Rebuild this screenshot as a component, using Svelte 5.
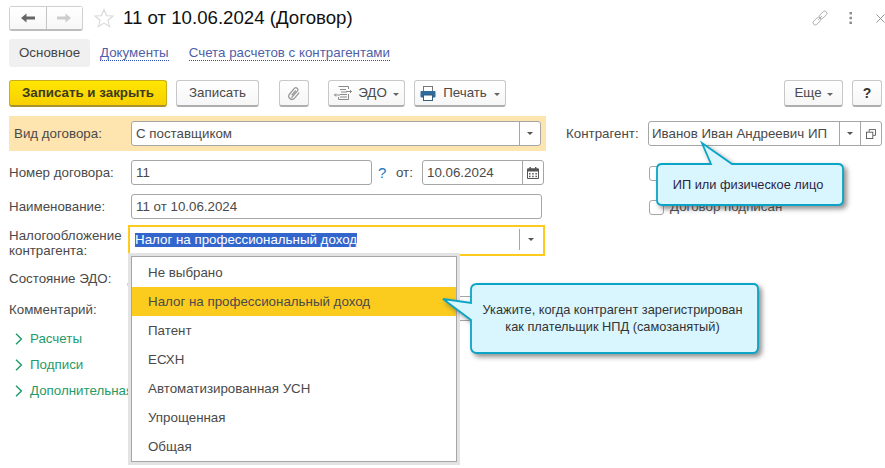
<script>
  const taxOptions = ['Не выбрано', 'Налог на профессиональный доход', 'Патент', 'ЕСХН', 'Автоматизированная УСН', 'Упрощенная', 'Общая'];
  const sections = ['Расчеты', 'Подписи', 'Дополнительная'];
</script>

<div class="page">
  <header class="titlebar">
    <div class="nav">
      <button class="nav-btn" aria-label="Назад">
        <svg width="16" height="12" viewBox="0 0 16 12"><path d="M1 6 L6.5 1.5 V4.5 H15 V7.5 H6.5 V10.5 Z" fill="#666"/></svg>
      </button>
      <button class="nav-btn" aria-label="Вперед">
        <svg width="16" height="12" viewBox="0 0 16 12"><path d="M15 6 L9.5 1.5 V4.5 H1 V7.5 H9.5 V10.5 Z" fill="#ccc"/></svg>
      </button>
    </div>
    <svg class="star" width="20" height="20" viewBox="0 0 20 20"><path d="M10 1.5 L12.5 7.6 L19 8 L14 12.2 L15.6 18.6 L10 15.1 L4.4 18.6 L6 12.2 L1 8 L7.5 7.6 Z" fill="none" stroke="#dcdcdc" stroke-width="1.2"/></svg>
    <h1>11 от 10.06.2024 (Договор)</h1>
    <div class="win-icons">
      <svg width="16" height="16" viewBox="0 0 18 18"><g transform="rotate(-45 9 9)" fill="none" stroke="#aaa" stroke-width="1"><rect x="-1" y="6.5" width="10" height="5" rx="2.5"/><rect x="9" y="6.5" width="10" height="5" rx="2.5"/><path d="M6 9 H12"/></g></svg>
      <svg width="6" height="14" viewBox="0 0 6 14"><g fill="#888"><rect x="1.5" y="1" width="2.4" height="2.4"/><rect x="1.5" y="5.8" width="2.4" height="2.4"/><rect x="1.5" y="10.6" width="2.4" height="2.4"/></g></svg>
      <svg width="9" height="9" viewBox="0 0 10 10"><path d="M0.5 0.5 L9.5 9.5 M9.5 0.5 L0.5 9.5" stroke="#8a8a8a" stroke-width="1" fill="none"/></svg>
    </div>
  </header>

  <nav class="tabs">
    <span class="tab active">Основное</span>
    <span class="tab link">Документы</span>
    <span class="tab link second">Счета расчетов с контрагентами</span>
  </nav>

  <div class="toolbar">
    <button class="btn primary">Записать и закрыть</button>
    <button class="btn save">Записать</button>
    <button class="btn clip" aria-label="Вложения">
      <svg width="14" height="16" viewBox="0 0 16 18"><path d="M5 14.5 L12 6.5 a2.3 2.3 0 0 0 -3.4 -3 L2.8 10.4 a3.7 3.7 0 0 0 5.4 5 L14 8.5 M5.4 11.6 L10 6.2" fill="none" stroke="#9a9a9a" stroke-width="1.5"/></svg>
    </button>
    <button class="btn edo">
      <svg width="18" height="16" viewBox="0 0 18 16"><g fill="none" stroke="#8a8a8a" stroke-width="1"><path d="M4.5 1.5 H14.5 V4 M14.5 9 V14.5 H4.5 V12"/><path d="M6 4.5 H12 M7 7 H13 M6 9.5 H13 M6 12 H13"/><path d="M0.5 10 H6 M2 8.5 L0.5 10 L2 11.5"/><path d="M12 6.5 H17.5 M16 5 L17.5 6.5 L16 8"/></g></svg>
      <span>ЭДО</span><i class="caret"></i>
    </button>
    <button class="btn print">
      <svg width="16" height="15" viewBox="0 0 16 15"><rect x="3.5" y="0.5" width="9" height="5" fill="#fff" stroke="#777"/><rect x="0.5" y="5" width="15" height="6.5" rx="1" fill="#2f6b9c"/><rect x="3.5" y="9" width="9" height="5.5" fill="#fff" stroke="#315d80"/></svg>
      <span>Печать</span><i class="caret"></i>
    </button>
    <div class="spacer"></div>
    <button class="btn more"><span>Еще</span><i class="caret"></i></button>
    <button class="btn help">?</button>
  </div>

  <main class="form">
    <section class="left">
      <div class="strip">
        <label class="strip-label" for="kind">Вид договора:</label>
        <div class="field kind">
          <span id="kind" class="value">С поставщиком</span>
          <span class="cell"><i class="caret dark"></i></span>
        </div>
      </div>

      <div class="row number">
        <span class="label">Номер договора:</span>
        <div class="field num"><span class="value">11</span></div>
        <span class="q">?</span>
        <span class="from">от:</span>
        <div class="field date">
          <span class="value">10.06.2024</span>
          <span class="cell">
            <svg width="12" height="12" viewBox="0 0 12 12"><path d="M0.5 2 H11.5 V11.5 H0.5 Z" fill="#fff" stroke="#555"/><rect x="0.5" y="1.5" width="11" height="3" fill="#555"/><rect x="2.5" y="0" width="1.4" height="2" fill="#555"/><rect x="8" y="0" width="1.4" height="2" fill="#555"/><g fill="#555"><rect x="2" y="6" width="1.5" height="1.5"/><rect x="5.2" y="6" width="1.5" height="1.5"/><rect x="8.4" y="6" width="1.5" height="1.5"/><rect x="2" y="8.7" width="1.5" height="1.5"/><rect x="5.2" y="8.7" width="1.5" height="1.5"/><rect x="8.4" y="8.7" width="1.5" height="1.5"/></g></svg>
          </span>
        </div>
      </div>

      <div class="row name">
        <span class="label">Наименование:</span>
        <div class="field wide"><span class="value">11 от 10.06.2024</span></div>
      </div>

      <div class="row tax">
        <span class="label two">Налогообложение<br />контрагента:</span>
        <div class="field focused">
          <span class="value"><span class="selected">Налог на профессиональный доход</span></span>
          <span class="cell plain"><i class="caret dark"></i></span>
        </div>
      </div>

      <div class="row edo-state">
        <span class="label">Состояние ЭДО:</span>
        <span class="tick"></span>
      </div>

      <div class="row comment">
        <span class="label">Комментарий:</span>
        <div class="field comment-field"></div>
      </div>

      <ul class="groups">
        {#each sections as s}
          <li>
            <svg width="8" height="12" viewBox="0 0 8 12"><path d="M1 0.8 L6.4 6 L1 11.2" fill="none" stroke="#1f9b6a" stroke-width="1.4"/></svg>
            <span>{s}</span>
          </li>
        {/each}
      </ul>
    </section>

    <section class="right">
      <div class="partner">
        <span class="partner-label">Контрагент:</span>
        <div class="field partner-field">
          <span class="value">Иванов Иван Андреевич ИП</span>
          <span class="cell small"><i class="caret dark"></i></span>
          <span class="cell small">
            <svg width="10" height="10" viewBox="0 0 11 11"><path d="M3.5 3 V0.5 H10.5 V7 H8" fill="none" stroke="#555"/><rect x="0.5" y="3.5" width="7" height="7" fill="none" stroke="#555"/></svg>
          </span>
        </div>
      </div>
      <label class="check first"><span class="box"></span></label>
      <label class="check"><span class="box"></span><span>Договор подписан</span></label>
    </section>
  </main>

  <ul class="dropdown">
    {#each taxOptions as o, i}
      <li class:hl={i === 1}>{o}</li>
    {/each}
  </ul>

  <div class="callout c1">
    <svg width="200" height="75" viewBox="0 0 200 75">
      <path class="bubble" d="M10 25 H59 L50 4 L80 25 H186 Q191 25 191 30 V61 Q191 66 186 66 H10 Q5 66 5 61 V30 Q5 25 10 25 Z"/>
    </svg>
    <span>ИП или физическое лицо</span>
  </div>

  <div class="callout c2">
    <svg width="330" height="85" viewBox="0 0 330 85">
      <path class="bubble" d="M40 9 Q40 3 46 3 H322 Q327 3 327 8 V66 Q327 72 322 72 H46 Q40 72 40 66 V39 L12 18 L40 22 Z"/>
    </svg>
    <span>Укажите, когда контрагент зарегистрирован<br />как плательщик НПД (самозанятый)</span>
  </div>
</div>

<style>
  :global(body) { margin: 0; background: #fff; }
  * { box-sizing: border-box; }
  .page {
    position: relative;
    width: 885px;
    height: 468px;
    overflow: hidden;
    background: #fff;
    font: 13.33px/16px "Liberation Sans", Arial, sans-serif;
    color: #4a4a4a;
  }
  button { font: inherit; color: inherit; padding: 0; }
  ul { list-style: none; margin: 0; padding: 0; }

  .titlebar { display: flex; align-items: center; height: 36px; padding-left: 9px; }
  .nav { display: flex; width: 74px; height: 25px; border: 1px solid #cfcfcf; border-bottom: 2px solid #bdbdbd; border-radius: 3px; }
  .nav-btn { flex: 1; border: 0; background: linear-gradient(#fff, #f7f7f7); display: flex; align-items: center; justify-content: center; }
  .nav-btn:first-child { border-right: 1px solid #c4c4c4; }
  .star { margin-left: 11px; }
  h1 { margin: 0 0 0 9px; font: 400 18.67px/24px "Liberation Sans", Arial, sans-serif; color: #111; flex: 1; }
  .win-icons { display: flex; align-items: center; width: 73px; }
  .win-icons svg:nth-child(2) { margin-left: 20px; }
  .win-icons svg:nth-child(3) { margin-left: 22px; }

  .tabs { display: flex; align-items: center; height: 28px; margin: 3px 0 0 9px; }
  .tab { height: 28px; line-height: 28px; }
  .active { width: 81px; padding-left: 10px; background: #f0f0f0; border-radius: 3px; color: #444; }
  .link { margin-left: 10px; height: auto; line-height: 15px; color: #4f5fa8; border-bottom: 1px dotted #2a4fb0; margin-top: -1px; }
  .second { margin-left: 20px; }

  .toolbar { display: flex; height: 27px; margin-top: 13px; padding: 0 3px 0 9px; }
  .btn {
    height: 27px;
    border: 1px solid #c8c8c8;
    border-bottom: 2px solid #aeaeae;
    border-radius: 3px;
    background: linear-gradient(#fff, #f6f6f6);
    display: flex;
    align-items: center;
    justify-content: center;
    color: #4a4a4a;
  }
  .primary { width: 158px; background: linear-gradient(#ffe600, #f8d000); border-color: #c9ae1a; border-bottom-color: #a8932a; font-weight: 700; color: #3d3a20; }
  .save { width: 83px; margin-left: 9px; }
  .clip { width: 30px; margin-left: 20px; }
  .edo { width: 77px; margin-left: 19px; gap: 6px; }
  .print { width: 92px; margin-left: 9px; gap: 7px; }
  .spacer { flex: 1; }
  .more { width: 59px; gap: 5px; }
  .help { width: 30px; margin-left: 9px; font-weight: 700; color: #333; font-size: 14px; }
  .caret { display: inline-block; width: 0; height: 0; border-left: 3.5px solid transparent; border-right: 3.5px solid transparent; border-top: 3.5px solid #666; margin-top: 3px; }
  .caret.dark { border-top-color: #555; margin-top: 0; }

  .form { display: flex; margin: 9px 0 0 0; }
  .left { width: 546px; padding-left: 9px; flex: none; }
  .right { flex: 1; padding: 5px 0 0 20px; }

  .field { display: flex; height: 25px; border: 1px solid #a6a6a6; border-radius: 3px; background: #fff; align-items: stretch; }
  .value { flex: 1; padding-left: 4px; line-height: 23px; color: #4a4a4a; white-space: nowrap; overflow: hidden; }
  .cell { width: 21px; border-left: 1px solid #a6a6a6; display: flex; align-items: center; justify-content: center; flex: none; }
  .cell.plain { height: 21px; margin-top: 2px; width: 22px; margin-right: 2px; }
  .cell.small { width: 21px; }

  .strip { display: flex; align-items: center; height: 35px; background: #fee4ae; padding-left: 5px; }
  .strip-label { width: 117px; }
  .field.kind { width: 410px; }

  .row { display: flex; align-items: center; }
  .label { width: 122px; flex: none; color: #4a4a4a; }
  .number { margin-top: 9px; height: 25px; }
  .num { width: 241px; }
  .q { margin-left: 6px; width: 11px; color: #1976c0; font-size: 15px; }
  .from { margin-left: 7px; width: 26px; }
  .date { width: 122px; }
  .name { margin-top: 9px; height: 25px; }
  .wide { width: 411px; }
  .tax { margin-top: 6px; height: 31px; }
  .two { line-height: 15px; margin-top: 4px; }
  .focused { width: 417px; height: 31px; margin-left: -3px; border: 2px solid #fccb1e; border-radius: 0; }
  .focused .value { padding-left: 5px; line-height: 14px; padding-top: 6px; }
  .selected { background: #3366cc; color: #fff; display: inline-block; }
  .edo-state { margin-top: 8px; height: 30px; }
  .tick { width: 1px; height: 3px; background: #e3d9a0; margin-left: -4px; margin-top: 10px; }
  .comment { margin-top: 2px; height: 25px; }
  .comment .label { margin-top: 2px; }
  .comment-field { width: 411px; }

  .groups { margin-top: 5px; padding-left: 6px; }
  .groups li { display: flex; align-items: center; gap: 7px; height: 26px; color: #1f9b6a; }

  .partner { display: flex; align-items: center; height: 25px; }
  .partner-label { width: 82px; }
  .partner-field { width: 234px; }
  .partner-field .value { padding-left: 3px; }
  .check { display: flex; align-items: center; gap: 6px; height: 16px; margin: 18px 0 0 83px; color: #4a4a4a; }
  .check.first { margin-top: 19px; }
  .box { width: 15px; height: 15px; border: 1px solid #a6a6a6; border-radius: 3px; background: #fff; }

  .dropdown {
    position: absolute;
    left: 128px;
    top: 253px;
    width: 332px;
    height: 212px;
    background: #fff;
    border: 3px solid #e3e3e3;
    outline: 1px solid #a6a6a6;
    outline-offset: -4px;
    padding: 2px 1px 0;
  }
  .dropdown li { height: 29px; line-height: 29px; padding-left: 16px; color: #4a4a4a; }
  .dropdown .hl { background: #fbcc1e; }

  .callout { position: absolute; color: #333; font-size: 12.8px; }
  .callout svg { position: absolute; left: 0; top: 0; overflow: visible; filter: drop-shadow(3px 3px 2.5px rgba(70, 70, 70, .6)); }
  .bubble { fill: #d9f6ff; stroke: #0aa5c6; stroke-width: 1.8; }
  .callout span { position: absolute; text-align: center; white-space: nowrap; }
  .c1 { left: 652px; top: 139px; width: 200px; height: 75px; }
  .c1 span { left: 16px; top: 38px; width: 160px; color: #2c2440; }
  .c2 { left: 431px; top: 281px; width: 330px; height: 85px; }
  .c2 span { left: 38px; top: 20px; width: 287px; line-height: 17px; }
</style>
